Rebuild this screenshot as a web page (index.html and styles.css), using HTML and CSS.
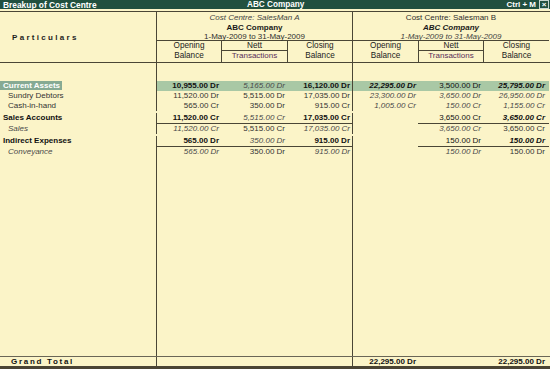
FILE: index.html
```html
<!DOCTYPE html>
<html lang="en">
<head>
    <meta charset="UTF-8">
    <title>Breakup of Cost Centre</title>
    <link rel="stylesheet" href="styles.css">
</head>
<body>
<div class="window">
    <div class="titlebar">
        <span class="tb-left">Breakup of Cost Centre</span>
        <span class="tb-mid">ABC Company</span>
        <span class="tb-right">Ctrl + M <span class="tb-close">&times;</span></span>
    </div>

    <div class="report">
        <div class="head">
            <div class="part-head">Particulars</div>
            <div class="group">
                <div class="group-title">
                    <div class="it">Cost Centre: SalesMan A</div>
                    <div class="b">ABC Company</div>
                    <div>1-May-2009 to 31-May-2009</div>
                </div>
                <div class="subheads sub-a">
                    <div class="sub">Opening<br>Balance</div>
                    <div class="sub nett"><div class="nett-top">Nett</div><div class="nett-bot">Transactions</div></div>
                    <div class="sub">Closing<br>Balance</div>
                </div>
            </div>
            <div class="group">
                <div class="group-title">
                    <div>Cost Centre: Salesman B</div>
                    <div class="b it">ABC Company</div>
                    <div class="it">1-May-2009 to 31-May-2009</div>
                </div>
                <div class="subheads sub-b">
                    <div class="sub">Opening<br>Balance</div>
                    <div class="sub nett"><div class="nett-top">Nett</div><div class="nett-bot">Transactions</div></div>
                    <div class="sub">Closing<br>Balance</div>
                </div>
            </div>
        </div>

        <div class="body">
            <div class="row spacer"><div></div><div></div><div></div><div></div><div></div><div></div><div></div></div>

            <div class="row grp hl">
                <div class="lbl"><span class="sel">Current Assets</span></div>
                <div class="b">10,955.00 Dr</div>
                <div class="it">5,165.00 Dr</div>
                <div class="b">16,120.00 Dr</div>
                <div class="b it">22,295.00 Dr</div>
                <div>3,500.00 Dr</div>
                <div class="b it">25,795.00 Dr</div>
            </div>
            <div class="row item">
                <div class="lbl">Sundry Debtors</div>
                <div>11,520.00 Dr</div>
                <div>5,515.00 Dr</div>
                <div>17,035.00 Dr</div>
                <div class="it">23,300.00 Dr</div>
                <div class="it">3,650.00 Dr</div>
                <div class="it">26,950.00 Dr</div>
            </div>
            <div class="row item">
                <div class="lbl">Cash-in-hand</div>
                <div>565.00 Cr</div>
                <div>350.00 Dr</div>
                <div>915.00 Cr</div>
                <div class="it">1,005.00 Cr</div>
                <div class="it">150.00 Cr</div>
                <div class="it">1,155.00 Cr</div>
            </div>

            <div class="row grp">
                <div class="lbl">Sales Accounts</div>
                <div class="b tot">11,520.00 Cr</div>
                <div class="it tot">5,515.00 Cr</div>
                <div class="b tot">17,035.00 Cr</div>
                <div></div>
                <div class="tot">3,650.00 Cr</div>
                <div class="b it tot">3,650.00 Cr</div>
            </div>
            <div class="row item">
                <div class="lbl it">Sales</div>
                <div class="it">11,520.00 Cr</div>
                <div>5,515.00 Cr</div>
                <div class="it">17,035.00 Cr</div>
                <div></div>
                <div class="it">3,650.00 Cr</div>
                <div>3,650.00 Cr</div>
            </div>

            <div class="row grp">
                <div class="lbl">Indirect Expenses</div>
                <div class="b tot">565.00 Dr</div>
                <div class="it tot">350.00 Dr</div>
                <div class="b tot">915.00 Dr</div>
                <div></div>
                <div class="tot">150.00 Dr</div>
                <div class="b it tot">150.00 Dr</div>
            </div>
            <div class="row item">
                <div class="lbl it">Conveyance</div>
                <div class="it">565.00 Dr</div>
                <div>350.00 Dr</div>
                <div class="it">915.00 Dr</div>
                <div></div>
                <div class="it">150.00 Dr</div>
                <div>150.00 Dr</div>
            </div>

            <div class="row filler"><div></div><div></div><div></div><div></div><div></div><div></div><div></div></div>
        </div>

        <div class="row total">
            <div class="lbl">Grand Total</div>
            <div></div>
            <div></div>
            <div></div>
            <div class="b">22,295.00 Dr</div>
            <div></div>
            <div class="b">22,295.00 Dr</div>
        </div>
    </div>
</div>
</body>
</html>
```

FILE: styles.css
```css
  body {
      margin: 0;
      padding: 0;
      font-family: "Liberation Sans", Arial, sans-serif;
      font-size: 8px;
      color: #2e2e2e;
      background-color: #fbf4c8;
      overflow: hidden;
  }

  .window {
      width: 550px;
      height: 369px;
      display: flex;
      flex-direction: column;
      background-color: #fbf4c8;
  }

  .titlebar {
      height: 9px;
      background-color: #21503f;
      color: #fff;
      font-weight: bold;
      font-size: 8.4px;
      display: flex;
      align-items: center;
      position: relative;
  }
  .tb-left {
      padding-left: 3px;
  }
  .tb-mid {
      position: absolute;
      left: 247px;
      top: 0;
      line-height: 9px;
      font-size: 8.2px;
  }
  .tb-right {
      margin-left: auto;
      display: flex;
      align-items: center;
      font-size: 8px;
  }
  .tb-close {
      display: inline-block;
      width: 8px;
      height: 7px;
      line-height: 7px;
      margin: 0 1px 0 3px;
      border: 1px solid #c8d6cf;
      font-size: 8px;
      text-align: center;
  }

  .report {
      flex: 1;
      margin-top: 2px;
      border-top: 1px solid #4a4636;
      border-bottom: 3px solid #4a4434;
      display: flex;
      flex-direction: column;
  }

  .b { font-weight: bold; }
  .it { font-style: italic; }

  /* header */
  .head {
      display: grid;
      grid-template-columns: 156px 196px 197px;
      height: 51px;
      border-bottom: 1px solid #4a4636;
      box-sizing: border-box;
  }
  .part-head {
      display: flex;
      align-items: center;
      padding-left: 12px;
      font-weight: bold;
      letter-spacing: 2.3px;
      color: #1e1e1e;
  }
  .group {
      border-left: 1px solid #4a4636;
      display: flex;
      flex-direction: column;
  }
  .group-title {
      height: 29px;
      box-sizing: border-box;
      padding-top: 1px;
      line-height: 9.5px;
      text-align: center;
      color: #2e2e2e;
      border-bottom: 1px solid #4a4636;
  }
  .group-title .it {
      color: #444;
  }
  .group-title .b {
      color: #1a1a1a;
  }
  .subheads {
      flex: 1;
      display: grid;
  }
  .sub-a { grid-template-columns: 64px 67px 64px; }
  .sub-b { grid-template-columns: 65px 66px 65px; }
  .sub {
      text-align: center;
      line-height: 10px;
      color: #222;
      font-size: 8.2px;
  }
  .nett {
      border-left: 1px solid #4a4636;
      border-right: 1px solid #4a4636;
  }
  .nett-top {
      height: 9px;
      line-height: 9px;
      border-bottom: 1px solid #4a4636;
  }
  .nett-bot {
      color: #5a2e5a;
      font-size: 8px;
  }

  /* rows */
  .body {
      flex: 1;
      display: flex;
      flex-direction: column;
  }
  .row {
      display: grid;
      grid-template-columns: 156px 65px 66px 65px 66px 65px 66px;
      line-height: 10px;
  }
  .row > div {
      text-align: right;
      padding-right: 2px;
      white-space: nowrap;
  }
  .row > div:last-child {
      padding-right: 4px;
  }
  .row > :nth-child(2),
  .row > :nth-child(5) {
      border-left: 1px solid #4a4636;
  }
  .row > .lbl {
      text-align: left;
      padding-left: 3px;
  }
  .spacer {
      height: 18px;
  }
  .filler {
      flex: 1;
  }

  .grp {
      margin-top: 2px;
      color: #111;
  }
  .grp .lbl {
      font-weight: bold;
  }
  .grp.hl {
      margin-top: 0;
  }
  .hl > div:not(.lbl) {
      background-color: #a9c8a5;
  }
  .sel {
      display: inline-block;
      background-color: #86aa93;
      color: #fff;
      margin-left: -3px;
      padding: 0 2px 0 3px;
      line-height: 9px;
  }
  .tot {
      border-bottom: 1px solid #4a4636;
  }

  .item {
      color: #333;
  }
  .item .lbl {
      padding-left: 8px;
  }
  .row > .it {
      color: #4a4a4a;
  }
  .grp > .b {
      color: #111;
  }

  .total {
      border-top: 1px solid #6a6656;
      height: 10px;
      box-sizing: border-box;
      line-height: 9px;
      color: #111;
  }
  .total .lbl {
      padding-left: 11px;
      font-weight: bold;
      letter-spacing: 1.7px;
  }
```
